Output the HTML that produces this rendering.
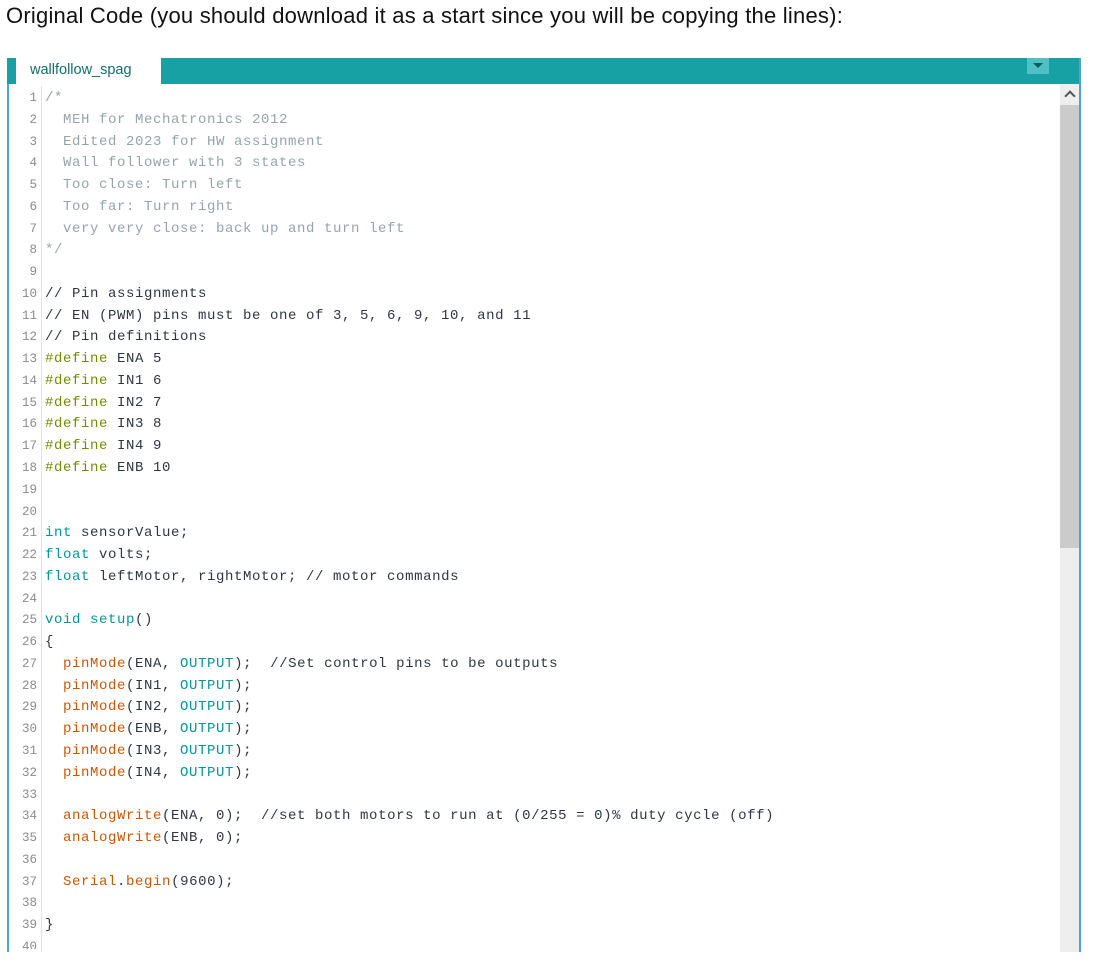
<!DOCTYPE html>
<html><head><meta charset="utf-8"><style>
body{margin:0;width:1102px;height:974px;background:#fff;position:relative;overflow:hidden;font-family:"Liberation Sans",sans-serif}
.t{position:absolute;left:6px;top:3px;font-size:22px;color:#111;font-family:"Liberation Sans",sans-serif;letter-spacing:0.22px}
.bar{position:absolute;left:7px;top:58px;width:1074px;height:26px;background:#17a1a5}
.tab{position:absolute;left:16px;top:58px;width:145px;height:26px;background:#fff;font-size:14.5px;color:#0f6f6f;line-height:24px;text-indent:14px}
.dd{position:absolute;left:1027px;top:58px;width:22px;height:16px;background:#4fc0c3}
.dd:after{content:"";position:absolute;left:6px;top:5px;border-left:5px solid transparent;border-right:5px solid transparent;border-top:5px solid #0b5e60}
.lb{position:absolute;left:7px;top:84px;width:2px;height:868px;background:#4aa3df}
.rb{position:absolute;left:1079px;top:58px;width:2px;height:894px;background:#4aa3df}
.sb{position:absolute;left:1060px;top:84px;width:19px;height:868px;background:#eeeeee}
.th{position:absolute;left:1060px;top:105px;width:19px;height:443px;background:#cbcbcb}
.up{position:absolute;left:1066px;top:92px;width:6px;height:6px;border-left:2px solid #555;border-top:2px solid #555;transform:rotate(45deg)}
.sep{position:absolute;left:41px;top:86px;width:1px;height:866px;background:#e3e3e3}
.code{position:absolute;left:0;top:88px;font-family:"Liberation Mono",monospace;font-size:14px;letter-spacing:0.6px;color:#2e383c}
.l{height:21.77px;line-height:21.77px;white-space:pre;position:relative}
.n{display:inline-block;width:37px;text-align:right;color:#8b8b8b;letter-spacing:0;font-size:12.5px;margin-right:8px}
.c{color:#95a5a6}.k{color:#00979c}.d{color:#728e00}.f{color:#d35400}
</style></head><body>
<div class="t">Original Code (you should download it as a start since you will be copying the lines):</div>
<div class="bar"></div><div class="tab">wallfollow_spag</div><div class="dd"></div>
<div class="lb"></div><div class="rb"></div><div class="sb"></div><div class="th"></div><div class="up"></div>
<div class="sep"></div>
<div class="code">
<div class="l"><span class="n">1</span><span class="c">/*</span></div>
<div class="l"><span class="n">2</span><span class="c">  MEH for Mechatronics 2012</span></div>
<div class="l"><span class="n">3</span><span class="c">  Edited 2023 for HW assignment</span></div>
<div class="l"><span class="n">4</span><span class="c">  Wall follower with 3 states</span></div>
<div class="l"><span class="n">5</span><span class="c">  Too close: Turn left</span></div>
<div class="l"><span class="n">6</span><span class="c">  Too far: Turn right</span></div>
<div class="l"><span class="n">7</span><span class="c">  very very close: back up and turn left</span></div>
<div class="l"><span class="n">8</span><span class="c">*/</span></div>
<div class="l"><span class="n">9</span></div>
<div class="l"><span class="n">10</span>// Pin assignments</div>
<div class="l"><span class="n">11</span>// EN (PWM) pins must be one of 3, 5, 6, 9, 10, and 11</div>
<div class="l"><span class="n">12</span>// Pin definitions</div>
<div class="l"><span class="n">13</span><span class="d">#define</span> ENA 5</div>
<div class="l"><span class="n">14</span><span class="d">#define</span> IN1 6</div>
<div class="l"><span class="n">15</span><span class="d">#define</span> IN2 7</div>
<div class="l"><span class="n">16</span><span class="d">#define</span> IN3 8</div>
<div class="l"><span class="n">17</span><span class="d">#define</span> IN4 9</div>
<div class="l"><span class="n">18</span><span class="d">#define</span> ENB 10</div>
<div class="l"><span class="n">19</span></div>
<div class="l"><span class="n">20</span></div>
<div class="l"><span class="n">21</span><span class="k">int</span> sensorValue;</div>
<div class="l"><span class="n">22</span><span class="k">float</span> volts;</div>
<div class="l"><span class="n">23</span><span class="k">float</span> leftMotor, rightMotor; // motor commands</div>
<div class="l"><span class="n">24</span></div>
<div class="l"><span class="n">25</span><span class="k">void</span> <span class="k">setup</span>()</div>
<div class="l"><span class="n">26</span>{</div>
<div class="l"><span class="n">27</span>  <span class="f">pinMode</span>(ENA, <span class="k">OUTPUT</span>);  //Set control pins to be outputs</div>
<div class="l"><span class="n">28</span>  <span class="f">pinMode</span>(IN1, <span class="k">OUTPUT</span>);</div>
<div class="l"><span class="n">29</span>  <span class="f">pinMode</span>(IN2, <span class="k">OUTPUT</span>);</div>
<div class="l"><span class="n">30</span>  <span class="f">pinMode</span>(ENB, <span class="k">OUTPUT</span>);</div>
<div class="l"><span class="n">31</span>  <span class="f">pinMode</span>(IN3, <span class="k">OUTPUT</span>);</div>
<div class="l"><span class="n">32</span>  <span class="f">pinMode</span>(IN4, <span class="k">OUTPUT</span>);</div>
<div class="l"><span class="n">33</span></div>
<div class="l"><span class="n">34</span>  <span class="f">analogWrite</span>(ENA, 0);  //set both motors to run at (0/255 = 0)% duty cycle (off)</div>
<div class="l"><span class="n">35</span>  <span class="f">analogWrite</span>(ENB, 0);</div>
<div class="l"><span class="n">36</span></div>
<div class="l"><span class="n">37</span>  <span class="f">Serial</span>.<span class="f">begin</span>(9600);</div>
<div class="l"><span class="n">38</span></div>
<div class="l"><span class="n">39</span>}</div>
<div class="l" style="height:12px;overflow:hidden"><span class="n">40</span></div>
</div>
</body></html>
